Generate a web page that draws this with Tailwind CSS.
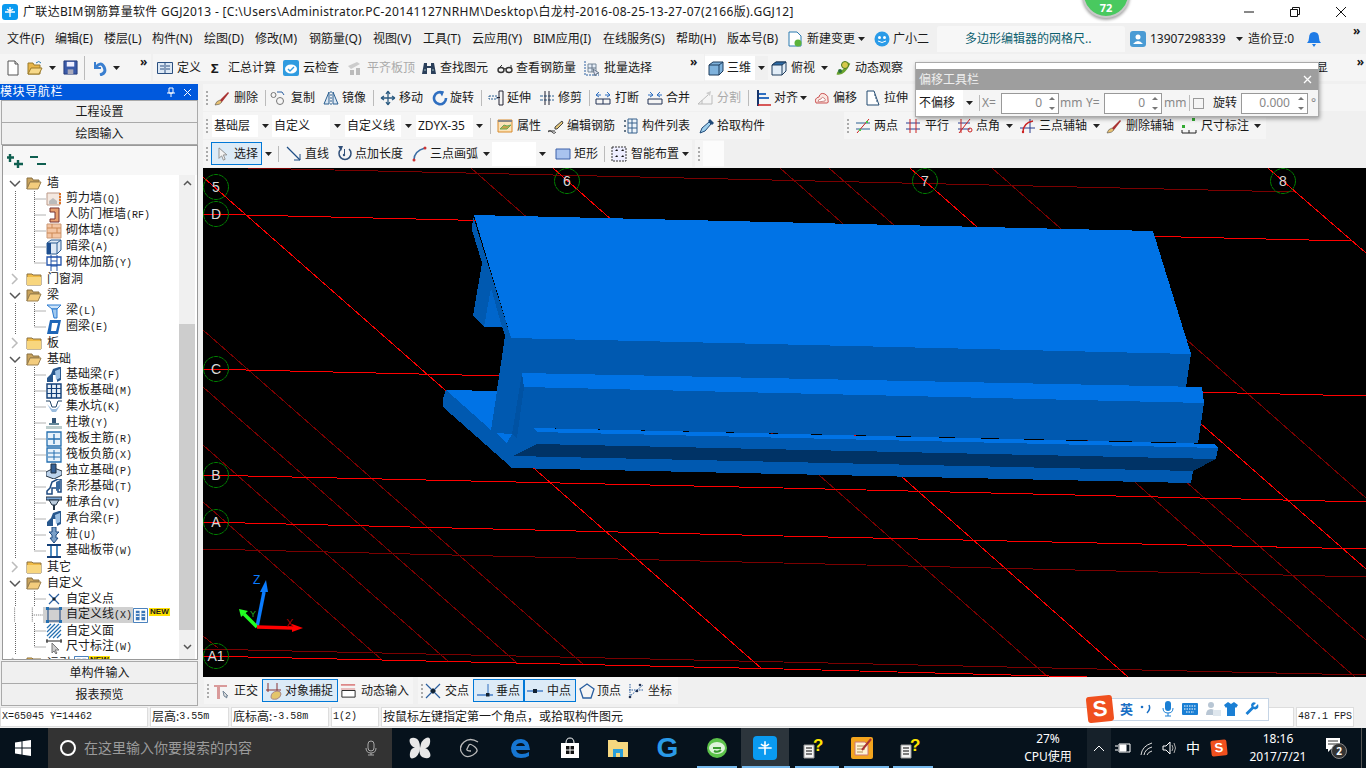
<!DOCTYPE html>
<html lang="zh"><head><meta charset="utf-8"><title>GGJ2013</title>
<script src="https://cdn.jsdelivr.net/npm/@tailwindcss/browser@4"></script></head>
<body class="w-[1366px] h-[768px] overflow-hidden relative bg-[#f0f0f0] text-[12px] leading-4 text-[#1a1a1a] font-['Noto_Sans','Noto_Sans_CJK_SC',sans-serif]">
<svg class="hidden" xmlns="http://www.w3.org/2000/svg">
<symbol id="dd" viewBox="0 0 7 4"><path d="M0 0h7L3.5 4z" fill="#222"/></symbol>
<symbol id="doc" viewBox="0 0 16 16"><path d="M3 1h7l3 3v11H3z" fill="#fff" stroke="#555"/><path d="M10 1v3h3" fill="#ddd" stroke="#555"/></symbol>
<symbol id="open" viewBox="0 0 16 16"><path d="M1 3h5l1 2h6v9H1z" fill="#e8b64a" stroke="#9a7a2a"/><path d="M1 14l3-6h11l-3 6z" fill="#f7d98a" stroke="#9a7a2a"/><path d="M9 3q3-3 5 0" fill="none" stroke="#2a7ab0"/></symbol>
<symbol id="save" viewBox="0 0 16 16"><path d="M1 1h14v14H1z" fill="#3a5aa8" stroke="#223a78"/><path d="M4 2h8v5H4z" fill="#eef"/><path d="M5 10h6v5H5z" fill="#aab"/></symbol>
<symbol id="undo" viewBox="0 0 16 16"><path d="M3 2v6h6" fill="none" stroke="#3a7fd0" stroke-width="2"/><path d="M4 7q5-6 8 0t-4 8" fill="none" stroke="#3a7fd0" stroke-width="3"/></symbol>
<symbol id="def" viewBox="0 0 16 16"><path d="M.5 2.5h15v11H.5z" fill="#dce8f5" stroke="#2a4f80"/><path d="M3 6h4M3 9h4M9 6h4M9 9h4M8 3v10" stroke="#2a4f80"/></symbol>
<symbol id="cloud" viewBox="0 0 16 16"><rect width="16" height="16" rx="2" fill="#2f9be0"/><ellipse cx="8" cy="9" rx="6" ry="4.5" fill="#fff"/><path d="M5 9l2 2 4-4" fill="none" stroke="#2f9be0" stroke-width="1.4"/></symbol>
<symbol id="flush" viewBox="0 0 16 16"><path d="M1 6l9-4 3 2-9 5z" fill="#ccc"/><path d="M3 10h4v5H3zM9 8h4v7H9z" fill="#bbb"/></symbol>
<symbol id="binoc" viewBox="0 0 16 16"><path d="M3 3h3v3h4V3h3l2 11H10V8H6v6H1z" fill="#2a3f5a"/><path d="M3 10h2M11 10h2" stroke="#9bb"/></symbol>
<symbol id="glass" viewBox="0 0 16 16"><ellipse cx="4" cy="10" rx="3" ry="2.5" fill="none" stroke="#333" stroke-width="1.4"/><ellipse cx="12" cy="10" rx="3" ry="2.5" fill="none" stroke="#333" stroke-width="1.4"/><path d="M7 9q1-1 2 0M2 8l3-3M14 8V5" stroke="#333" fill="none"/></symbol>
<symbol id="batch" viewBox="0 0 16 16"><path d="M1 1v14h14" fill="none" stroke="#2a5fa0" stroke-dasharray="2 1"/><path d="M4 4h8v8H4z" fill="#e6eef8" stroke="#789"/><path d="M4 8h8M8 4v8M9 9l6 4-3 1-1 2z" stroke="#678" fill="#dde"/></symbol>
<symbol id="box" viewBox="0 0 16 16"><path d="M1 5l4-3h10v9l-4 4H1z" fill="#7fb2dc" stroke="#1e3c5c"/><path d="M1 5h10v10M11 5l4-3" fill="none" stroke="#1e3c5c"/></symbol>
<symbol id="topv" viewBox="0 0 16 16"><path d="M1 5l4-3h10v9l-4 4H1z" fill="#e2edf7" stroke="#1e3c5c"/><path d="M1 5l4-3h10l-4 3z" fill="#2c6aa5" stroke="#1e3c5c"/><path d="M11 5v10" stroke="#1e3c5c"/></symbol>
<symbol id="orbit" viewBox="0 0 16 16"><path d="M2 13q6 2 12-10" fill="none" stroke="#6aa32e" stroke-width="3"/><circle cx="10" cy="5" r="3.5" fill="#d6c84a" stroke="#4a7a20"/><circle cx="5" cy="11" r="2" fill="#2a6f3a"/></symbol>
<symbol id="brush" viewBox="0 0 16 16"><path d="M1 15q1-4 5-5l2 2q-2 3-7 3z" fill="#e8c070" stroke="#555" stroke-width=".6"/><path d="M6 10l8-8 1 1-7 9z" fill="#a33"/></symbol>
<symbol id="copy" viewBox="0 0 16 16"><circle cx="3.5" cy="5" r="2.5" fill="none" stroke="#777"/><circle cx="10" cy="11" r="3.5" fill="none" stroke="#777"/><path d="M7 2h5M12 2l2 3" stroke="#2a5fa0" fill="none"/></symbol>
<symbol id="mirror" viewBox="0 0 16 16"><path d="M1 14L6 2v12zM15 14L10 2v12z" fill="#dbe7f3" stroke="#2a5f90"/><path d="M8 1v14" stroke="#2a5f90" stroke-dasharray="2 1"/></symbol>
<symbol id="move" viewBox="0 0 16 16"><path d="M8 1v14M1 8h14M8 1L6 4M8 1l2 3M8 15l-2-3M8 15l2-3M1 8l3-2M1 8l3 2M15 8l-3-2M15 8l-3 2" stroke="#2a5a80" stroke-width="1.3" fill="none"/></symbol>
<symbol id="rot" viewBox="0 0 16 16"><path d="M11 3a6 6 0 1 0 3 5" fill="none" stroke="#2f6fc0" stroke-width="2.6"/><path d="M7 1l5 .5-2 5z" fill="#2f6fc0"/></symbol>
<symbol id="ext" viewBox="0 0 16 16"><path d="M1 6h8v3H1z" fill="none" stroke="#2a5f90" stroke-dasharray="2 1"/><path d="M11 1h4v14h-4z" fill="none" stroke="#223"/><path d="M9 7.500h3" stroke="#223"/></symbol>
<symbol id="trim" viewBox="0 0 16 16"><path d="M1 6h14M1 10h14" stroke="#2a5f90" stroke-dasharray="3 1"/><path d="M6 1v14M10 1v14" stroke="#223"/></symbol>
<symbol id="brk" viewBox="0 0 16 16"><path d="M1 5l3-3M1 5l3 2M1 5h5M15 5l-3-3M15 5l-3 2M15 5h-5" stroke="#2f6fc0" fill="none"/><path d="M1 9h14v5H1zM8 9v5" fill="none" stroke="#235"/></symbol>
<symbol id="mrg" viewBox="0 0 16 16"><path d="M6 5L3 2M6 5l-3 2M6 5H1M10 5l3-3M10 5l3 2M10 5h5" stroke="#2f6fc0" fill="none"/><path d="M1 9h14v5H1z" fill="none" stroke="#235"/></symbol>
<symbol id="split" viewBox="0 0 16 16"><path d="M1 14h14M1 14l10-9M5 14V10M15 14V5" stroke="#bbb" fill="none"/><path d="M9 3l5-2-1 5z" fill="#ccc"/></symbol>
<symbol id="align" viewBox="0 0 16 16"><path d="M2 0v16" stroke="#17356b" stroke-width="2"/><path d="M3 4h7M3 8h10" stroke="#2f6fc0" stroke-width="2"/><path d="M2 15h13" stroke="#c22" stroke-width="1.500"/></symbol>
<symbol id="off" viewBox="0 0 16 16"><path d="M2 13q-2-5 3-6 1-5 6-3 4 2 3 6 1 3-1 3z" fill="#fbe6e0" stroke="#c55"/><path d="M4 12q0-3 3-3 1-3 3-1 2 1 1 3z" fill="#fff" stroke="#c88"/></symbol>
<symbol id="strch" viewBox="0 0 16 16"><path d="M2 1h7l5 14H2z" fill="#fff" stroke="#234a70"/><path d="M9 5l2 0M10 8h2M11 11h2" stroke="#234a70" stroke-dasharray="1 1"/></symbol>
<symbol id="prop" viewBox="0 0 16 16"><path d="M1 2h14v12H1z" fill="#fbe3b8" stroke="#d98a2a"/><path d="M1 2h14v2H1z" fill="#888"/><path d="M3 11l4-4 3 1 4-1-4 4z" fill="#c8a14a" stroke="#6a5"/></symbol>
<symbol id="edit" viewBox="0 0 16 16"><path d="M0 13h7" stroke="#333"/><path d="M7 9l7-6 1 2-6 6H7z" fill="#e6c97a" stroke="#444"/><path d="M0 14q2-3 4 0t4 0" fill="none" stroke="#444"/></symbol>
<symbol id="list" viewBox="0 0 16 16"><path d="M1 2h2v2H1zM1 7h2v2H1zM1 12h2v2H1z" fill="#678"/><path d="M5 1h9v14H5zM5 5h9M5 10h9M9 1v14" fill="#eef5fb" stroke="#37618c"/></symbol>
<symbol id="pick" viewBox="0 0 16 16"><path d="M1 15l2-5 7-6 2 2-6 7z" fill="#9fd0ee" stroke="#204a78"/><path d="M9 3l2-2 4 4-2 2z" fill="#204a78"/></symbol>
<symbol id="two" viewBox="0 0 16 16"><path d="M1 5h14M1 11h14" stroke="#2a5f90"/><path d="M2 15L14 1" stroke="#c22"/><path d="M4 11h2v2H4zM11 3h2v2h-2z" fill="#4c4"/></symbol>
<symbol id="par" viewBox="0 0 16 16"><path d="M1 5h14M1 11h14" stroke="#2a3f90"/><path d="M5 1v14M11 1v14" stroke="#c22"/></symbol>
<symbol id="ang" viewBox="0 0 16 16"><path d="M1 5h12M1 11h12" stroke="#2a3f90"/><path d="M2 15L13 1M4 1v14" stroke="#c22"/><circle cx="13" cy="12" r="2" fill="none" stroke="#c22"/></symbol>
<symbol id="arc3" viewBox="0 0 16 16"><path d="M0 10h15M10 1v14" stroke="#2a3f90"/><path d="M3 14q0-9 10-11" fill="none" stroke="#c22" stroke-width="1.300"/><circle cx="3" cy="14" r="1.200" fill="#c22"/></symbol>
<symbol id="dim" viewBox="0 0 16 16"><path d="M1 15h14M1 12v3M8 12v3M15 12v3" stroke="#222"/><path d="M1 7h3v3H1zM11 0h3v3h-3z" fill="#3a3"/></symbol>
<symbol id="curs" viewBox="0 0 12 16"><path d="M2 1v12l3-3 2 5 2-1-2-5h4z" fill="#f4f4f4" stroke="#888"/></symbol>
<symbol id="line" viewBox="0 0 16 16"><path d="M1 1l13 13" stroke="#1f4f86" stroke-width="1.300"/><path d="M14 8v6H8" fill="none" stroke="#1f4f86"/></symbol>
<symbol id="plen" viewBox="0 0 16 16"><path d="M5 3a6 6 0 1 0 8 0" fill="none" stroke="#30507a" stroke-width="1.500"/><path d="M2 0h5l-2 5zM8 8h1V3H8z" fill="#30507a"/><circle cx="8" cy="9" r="1.200" fill="#30507a"/></symbol>
<symbol id="arcd" viewBox="0 0 16 16"><path d="M2 14q0-9 11-12" fill="none" stroke="#3a6ea5" stroke-width="1.500"/><circle cx="2" cy="14" r="1.500" fill="#c33"/><circle cx="13" cy="2" r="1.500" fill="#c33"/></symbol>
<symbol id="rect" viewBox="0 0 16 16"><path d="M1 3h14v10H1z" fill="#a9c3ee" stroke="#3c60a8"/></symbol>
<symbol id="smart" viewBox="0 0 16 16"><path d="M1 1h14v14H1z" fill="#eef" stroke="#333" stroke-dasharray="2 1"/><path d="M4 5l2-2 1 2zM10 5l2-2 1 2zM4 11l2-2 1 2zM10 11l2-2 1 2z" fill="#111"/></symbol>
<symbol id="orth" viewBox="0 0 16 16"><path d="M0 2h13v2H0zM3 2h3v14H3z" fill="#d99a9a"/><path d="M9 8l5 5-2 0 1 2-3-2z" fill="#ddd" stroke="#789"/></symbol>
<symbol id="snap" viewBox="0 0 18 18"><path d="M3 1v9M12 1v9M1 8h15" stroke="#833" fill="none"/><path d="M6 15q0-5 6-6 4 0 4 3t-4 5q-6 1-6-2z" fill="#e3c56b" stroke="#a88"/></symbol>
<symbol id="dyn" viewBox="0 0 18 18"><path d="M1 2h15v2H1zM1 7h15v1H1z" fill="#d88"/><path d="M2 9h14v7H2z" fill="#fff" stroke="#222"/></symbol>
<symbol id="cross" viewBox="0 0 16 16"><path d="M1 1l14 14M15 1L1 15" stroke="#2a5fa0" stroke-width="1.200"/><path d="M5 8l3-3 3 3-3 3z" fill="#123"/></symbol>
<symbol id="perp" viewBox="0 0 16 16"><path d="M0 12h16" stroke="#2f6fc0" stroke-width="1.300"/><path d="M11 1v11" stroke="#2f6fc0"/><rect x="9" y="10" width="3.500" height="3.500" fill="#123"/></symbol>
<symbol id="midp" viewBox="0 0 16 16"><path d="M0 8h16" stroke="#2f6fc0" stroke-width="1.300"/><rect x="6" y="6" width="4" height="4" fill="#123"/></symbol>
<symbol id="vert" viewBox="0 0 16 16"><path d="M8 1l7 5-3 9H4L1 6z" fill="none" stroke="#2a5fa0" stroke-width="1.300"/></symbol>
<symbol id="coord" viewBox="0 0 16 16"><path d="M1 14L15 2M2 1v14M1 7h14" stroke="#2a5fa0" stroke-dasharray="1.500 1" fill="none"/><circle cx="12" cy="2" r="1.300" fill="#235"/><circle cx="2" cy="14" r="1.300" fill="#235"/><circle cx="9" cy="8" r="1.300" fill="#235"/></symbol>
<symbol id="fo" viewBox="0 0 16 16"><path d="M1 3h5l1 2h6v2H4l-3 7z" fill="#c9a35c" stroke="#8a7040"/><path d="M1 14l3-7h11l-3 7z" fill="#f3cc7d" stroke="#9a8050"/></symbol>
<symbol id="fc" viewBox="0 0 16 16"><path d="M1 3h5l1 1h8v10H1z" fill="#f0bb46" stroke="#8a7040"/><path d="M1 6h14v8H1z" fill="#f8d67e"/></symbol>
<symbol id="copen" viewBox="0 0 16 16"><path d="M3 6l5 5 5-5" fill="none" stroke="#555" stroke-width="1.500"/></symbol>
<symbol id="cshut" viewBox="0 0 16 16"><path d="M5 3l5 5-5 5" fill="none" stroke="#bbb" stroke-width="1.500"/></symbol>
<symbol id="tm" viewBox="0 0 43 16"><path d="M12.500 0v16M31.500 0v16M31.500 8H43" stroke="#666" stroke-dasharray="1 1"/></symbol>
<symbol id="tl" viewBox="0 0 43 16"><path d="M12.500 0v16M31.500 0v8M31.500 8H43" stroke="#666" stroke-dasharray="1 1"/></symbol>
<symbol id="shear" viewBox="0 0 16 16"><path d="M1 2h13v12H1z" fill="#f4e8e0" stroke="#b98"/><path d="M3 10l4-3 4 3v3H3z" fill="#bbb"/><path d="M14 2v12" stroke="#e07020" stroke-dasharray="2 1" stroke-width="2"/></symbol>
<symbol id="door" viewBox="0 0 16 16"><path d="M4 1h9v14H4v-3h5V5H4z" fill="#e8a070" stroke="#733"/></symbol>
<symbol id="brick" viewBox="0 0 16 16"><path d="M1 1h14v14H1z" fill="#f4c6a4" stroke="#c97"/><path d="M1 5h14M1 10h14M6 1v4M11 5v5M6 10v5" stroke="#c85"/></symbol>
<symbol id="dbeam" viewBox="0 0 16 16"><path d="M1 4l4-3h10v10l-4 4H1z" fill="#dfe9f5" stroke="#2a5a90"/><path d="M1 4h10v11M11 4l4-3" fill="none" stroke="#2a5a90"/><path d="M1 4h4v11H1z" fill="#1e4f90"/></symbol>
<symbol id="mason" viewBox="0 0 16 16"><path d="M1 2h14v8H1z" fill="none" stroke="#1f50a8" stroke-width="1.300"/><path d="M5 0v16M11 0v16M5 6h6M5 11h6" stroke="#1f50a8"/></symbol>
<symbol id="beam" viewBox="0 0 16 16"><path d="M1 2h14l-4 4H6z" fill="#cfe4f8" stroke="#2a7ad0"/><path d="M6 6h5v9H8z" fill="#9fc8ef" stroke="#2a7ad0"/></symbol>
<symbol id="ring" viewBox="0 0 16 16"><path d="M4 1h11l-3 14H1z" fill="#1e66b8"/><path d="M6 4h6l-2 8H5z" fill="#fff"/></symbol>
<symbol id="fbeam" viewBox="0 0 16 16"><path d="M1 15v-4l4-4 2-5 6-2h2v13l-4 2V8H7v7z" fill="#28588e"/><path d="M9 4l5-2v9l-4 2z" fill="#9cc0e4"/></symbol>
<symbol id="raft" viewBox="0 0 16 16"><path d="M1 1h14v14H1z" fill="#e8f0f8" stroke="#123f78" stroke-width="1.400"/><path d="M1 5.500h14M1 10.500h14M5.500 1v14M10.500 1v14" stroke="#123f78" stroke-width="1.200"/></symbol>
<symbol id="pit" viewBox="0 0 16 16"><path d="M0 2h4l2 6h4l2-6h4" fill="none" stroke="#246"/><path d="M1 5l5 8h4l5-8-5 5H6z" fill="#9bd"/></symbol>
<symbol id="pier" viewBox="0 0 16 16"><path d="M6 3h4v5H6z" fill="#357"/><path d="M3 8h10v2H3z" fill="#689"/><path d="M0 11h16v3H0z" fill="#bcc"/></symbol>
<symbol id="rmain" viewBox="0 0 16 16"><path d="M1 1h14v14H1z" fill="#e8f2fb" stroke="#246fb0" stroke-width="1.300"/><path d="M2 8h12M8 3v10" stroke="#246fb0" stroke-width="1.300"/></symbol>
<symbol id="rneg" viewBox="0 0 16 16"><path d="M1 1h14v14H1z" fill="#e8f2fb" stroke="#246fb0" stroke-width="1.300"/><path d="M2 6h12M2 10h12M8 3v10" stroke="#246fb0"/></symbol>
<symbol id="iso" viewBox="0 0 16 16"><path d="M0 9l8-4 8 3v4l-8 4-8-3z" fill="#bcd3ec" stroke="#234"/><path d="M5 1h5v9H5z" fill="#345f94" stroke="#234"/></symbol>
<symbol id="strip" viewBox="0 0 16 16"><path d="M1 15v-3l3-3 2-6 6-3h3v13h-3V9H6v6z" fill="#fff" stroke="#1e4a80" stroke-width="1.500"/><path d="M10 3l4-2v9l-4 2z" fill="#38699e"/></symbol>
<symbol id="cap" viewBox="0 0 16 16"><path d="M0 2h16v3H0z" fill="#7aa6d6" stroke="#234"/><path d="M3 5h10l-3 5H6z" fill="#bcd" stroke="#234"/><path d="M7 10h2v5H7z" fill="#234"/></symbol>
<symbol id="pile" viewBox="0 0 16 16"><path d="M6 0h4v5h3l-3 3v3h2l-4 5-4-5h2V8L3 5h3z" fill="#7aa0c8" stroke="#1e4a80"/></symbol>
<symbol id="bnd" viewBox="0 0 16 16"><path d="M1 2h14M1 14h14" stroke="#123f78" stroke-width="2"/><path d="M5 3v10M11 3v10" stroke="#246fb0" stroke-width="1.600"/></symbol>
<symbol id="cpt" viewBox="0 0 16 16"><path d="M3 3l10 10M13 3L3 13" stroke="#2a5fa0" stroke-width="1.200"/><path d="M6 8l2-2 2 2-2 2z" fill="#123"/></symbol>
<symbol id="cln" viewBox="0 0 16 16"><path d="M2 2h12v12H2z" fill="none" stroke="#123f78"/><path d="M0 0h3v3H0zM13 0h3v3h-3zM0 13h3v3H0zM13 13h3v3h-3z" fill="#246fb0"/></symbol>
<symbol id="cfc" viewBox="0 0 16 16"><path d="M1 1h14v14H1z" fill="#fff"/><path d="M1 5l4-4M1 9l8-8M1 13L13 1M3 15L15 3M7 15l8-8M11 15l4-4" stroke="#246fb0" stroke-width="1.200"/></symbol>
<symbol id="cdim" viewBox="0 0 16 16"><path d="M0 2h16M1 0v4M15 0v4" stroke="#222"/><path d="M6 4v10l2-2 2 3 1-1-2-3h4z" fill="#ccc" stroke="#777"/></symbol>
<symbol id="cgrid" viewBox="0 0 16 16"><path d="M.5.5h15v15H.5z" fill="#fff" stroke="#3a76b8"/><path d="M3 3h4v10H3zM9 3h4v10H9z" fill="#3a76b8"/><path d="M3 6h4M3 9h4M9 6h4M9 9h4" stroke="#fff"/></symbol>
<symbol id="ques" viewBox="0 0 24 24"><path d="M3 9h10v13H3z" fill="#f3f3f3" stroke="#999"/><path d="M5 12h6M5 15h6M5 18h6" stroke="#555" stroke-width="1.500"/><text x="12" y="15" font-family="Liberation Sans" font-size="17" font-weight="700" fill="#ffe500">?</text></symbol>
</svg>

<!-- title -->
<div class="h-[23px] bg-white flex items-center relative">
  <span class="ml-[2px] size-[16px] rounded-[3px] bg-[#0a9af0] flex items-center justify-center"><svg class="size-[12px]" viewBox="0 0 12 12"><path d="M6 1v10M1 6h10M3 3q3 3 6 0" stroke="#fff" stroke-width="1.300" fill="none"/></svg></span>
  <span class="ml-[5px] whitespace-nowrap tracking-[0.32px]">广联达BIM钢筋算量软件 GGJ2013 - [C:\Users\Administrator.PC-20141127NRHM\Desktop\白龙村-2016-08-25-13-27-07(2166版).GGJ12]</span>
  <div class="ml-auto flex items-center">
    <svg class="size-[12px] mr-[34px]" viewBox="0 0 12 12"><path d="M1 6h10" stroke="#111"/></svg>
    <svg class="size-[12px] mr-[34px]" viewBox="0 0 12 12"><path d="M1.500 3.500h7v7h-7zM3.500 3.500v-2h7v7h-2" fill="none" stroke="#111"/></svg>
    <svg class="size-[12px] mr-[19px]" viewBox="0 0 12 12"><path d="M1 1l10 10M11 1L1 11" stroke="#111"/></svg>
  </div>
</div>
<!-- green badge -->
<div class="absolute left-[1082px] top-[-30px] size-[48px] rounded-full bg-[#49c95f] border-2 border-[#c8c8c8] shadow-[0_2px_3px_rgba(0,0,0,.35)] flex items-end justify-center text-white font-bold text-[11px] leading-[16px] z-20">72</div>

<!-- menu -->
<div class="h-[31px] flex items-center pl-[7px] whitespace-nowrap">
  <span class="w-[48px]">文件(F)</span><span class="w-[49px]">编辑(E)</span><span class="w-[48px]">楼层(L)</span><span class="w-[52px]">构件(N)</span><span class="w-[51px]">绘图(D)</span><span class="w-[54px]">修改(M)</span><span class="w-[64px]">钢筋量(Q)</span><span class="w-[50px]">视图(V)</span><span class="w-[49px]">工具(T)</span><span class="w-[61px]">云应用(Y)</span><span class="w-[70px]">BIM应用(I)</span><span class="w-[73px]">在线服务(S)</span><span class="w-[51px]">帮助(H)</span><span class="w-[60px]">版本号(B)</span>
  <svg class="size-4 shrink-0" viewBox="0 0 16 16"><path d="M2 1h8l4 4v10H2z" fill="#fff" stroke="#2a7ab0"/><circle cx="11" cy="12" r="3.500" fill="#5cb33a"/></svg>
  <span class="ml-[4px] w-[51px]">新建变更</span><svg class="w-[7px] h-[4px] shrink-0"><use href="#dd"/></svg>
  <svg class="ml-[9px] size-4 shrink-0" viewBox="0 0 16 16"><circle cx="8" cy="8" r="7.500" fill="#2a9be8"/><circle cx="5.500" cy="6.500" r="1.500" fill="#fff"/><circle cx="10.500" cy="6.500" r="1.500" fill="#fff"/><path d="M4 10q4 3 8 0" stroke="#fff" fill="none"/></svg>
  <span class="ml-[3px] w-[44px]">广小二</span>
  <span class="h-[26px] w-[188px] bg-[#f7f7f7] rounded-t-[3px] flex items-center pl-[28px] text-[#0d5f6f]">多边形编辑器的网格尺..</span>
  <span class="ml-[5px] size-4 rounded-[3px] bg-[#4a9bd4] flex items-center justify-center"><svg class="size-3" viewBox="0 0 12 12"><circle cx="6" cy="4" r="2.500" fill="#fff"/><path d="M1 11q5-6 10 0z" fill="#fff"/></svg></span>
  <span class="ml-[4px] w-[86px]">13907298339</span><svg class="w-[7px] h-[4px] shrink-0"><use href="#dd"/></svg>
  <span class="ml-[5px] w-[58px]">造价豆:0</span>
  <svg class="size-4 shrink-0" viewBox="0 0 16 16"><path d="M8 1q5 0 5 6 0 3 2 5H1q2-2 2-5 0-6 5-6z" fill="#1e7be6"/><path d="M6 13h4l-2 3z" fill="#1e7be6"/></svg>
  <span class="ml-[31px] font-bold leading-3 self-start mt-[2px]">»</span>
</div>

<!-- toolbar 1 -->
<div class="h-[27px] flex items-center whitespace-nowrap">
  <div class="h-[27px] w-[151px] bg-[#f5f5f5] flex items-center pl-[5px] shrink-0">
    <svg class="size-4 shrink-0"><use href="#doc"/></svg>
    <svg class="ml-[6px] size-4 shrink-0"><use href="#open"/></svg>
    <svg class="ml-[6px] w-[7px] h-[4px] shrink-0"><use href="#dd"/></svg>
    <svg class="ml-[7px] size-[15px] shrink-0"><use href="#save"/></svg>
    <span class="ml-[6px] w-px h-[24px] bg-[#bbb]"></span>
    <svg class="ml-[7px] size-4 shrink-0"><use href="#undo"/></svg>
    <svg class="ml-[5px] w-[7px] h-[4px] shrink-0"><use href="#dd"/></svg>
    <span class="ml-[20px] font-bold leading-3 self-start mt-[2px]">»</span>
  </div>
  <div class="ml-[2px] h-[27px] w-[551px] bg-[#f5f5f5] flex items-center pl-[4px] shrink-0">
    <span class="flex w-[54px] items-center gap-[4px]"><svg class="size-4 shrink-0"><use href="#def"/></svg>定义</span>
    <span class="flex w-[72px] items-center gap-[9px]"><span class="w-2 font-bold text-[13px]">Σ</span>汇总计算</span>
    <span class="flex w-[64px] items-center gap-[4px]"><svg class="size-4 shrink-0"><use href="#cloud"/></svg>云检查</span>
    <span class="flex w-[74px] items-center gap-[4px] text-[#aaa]"><svg class="size-4 shrink-0"><use href="#flush"/></svg>平齐板顶</span>
    <span class="flex w-[76px] items-center gap-[3px]"><svg class="size-4 shrink-0"><use href="#binoc"/></svg>查找图元</span>
    <span class="flex w-[87px] items-center gap-[3px]"><svg class="size-4 shrink-0"><use href="#glass"/></svg>查看钢筋量</span>
    <span class="flex w-[90px] items-center gap-[4px]"><svg class="size-4 shrink-0"><use href="#batch"/></svg>批量选择</span>
    <span class="ml-[16px] font-bold leading-3 self-start mt-[2px]">»</span>
  </div>
  <div class="ml-[1px] h-[27px] flex-1 bg-[#f5f5f5] flex items-center relative">
    <span class="h-[24px] w-[50px] bg-white flex items-center gap-[3px] pl-[3px]"><svg class="size-4 shrink-0"><use href="#box"/></svg>三维</span>
    <span class="h-[24px] w-[13px] bg-[#f0f0f0] flex items-center justify-center"><svg class="w-[7px] h-[4px]"><use href="#dd"/></svg></span>
    <span class="ml-[3px] flex items-center gap-[4px]"><svg class="size-4 shrink-0"><use href="#topv"/></svg>俯视</span><svg class="ml-[6px] w-[7px] h-[4px] shrink-0"><use href="#dd"/></svg>
    <span class="ml-[7px] flex items-center gap-[4px]"><svg class="size-4 shrink-0"><use href="#orbit"/></svg>动态观察</span>
    <span class="ml-[413px]">显</span>
    <span class="ml-auto mr-[2px] font-bold leading-3 self-start mt-[2px]">»</span>
  </div>
</div>

<!-- main -->
<div class="mt-[3px] h-[622px] flex">
  <!-- left panel -->
  <div class="w-[203px] shrink-0 flex flex-col pr-[5px]">
    <div class="h-[16px] bg-[#0059dd] text-white flex items-center tracking-[0.6px] pr-[6px]"><span>模块导航栏</span>
      <svg class="ml-auto size-[10px]" viewBox="0 0 10 10"><path d="M3 1h4v5H3zM1 6h8M5 6v4" stroke="#fff" fill="none"/></svg>
      <svg class="ml-[7px] size-[9px]" viewBox="0 0 9 9"><path d="M1 1l7 7M8 1L1 8" stroke="#fff"/></svg></div>
    <div class="ml-[1px] h-[23px] border border-[#aaa] flex items-center justify-center pt-px">工程设置</div>
    <div class="ml-[1px] h-[22px] border border-t-0 border-[#aaa] flex items-center justify-center">绘图输入</div>
    <div class="ml-[2px] h-[515px] border border-[#999] bg-white flex flex-col overflow-hidden">
      <div class="h-[29px] shrink-0 bg-[#f7f7f7] flex items-center pl-[4px] gap-[7px]">
        <svg class="size-4" viewBox="0 0 16 16"><path d="M3 1v8M0 4.500h7M11 7v8M7 11h9" stroke="#0f5f50" stroke-width="2.400"/></svg>
        <svg class="size-4" viewBox="0 0 16 16"><path d="M0 4h8M7 11h9" stroke="#0f5f50" stroke-width="2.200"/></svg>
      </div>
      <div class="flex-1 flex min-h-0">
        <div class="w-[176px] h-full overflow-hidden whitespace-nowrap">
          <div class="h-4 flex items-center"><svg class="ml-[4px] size-4 shrink-0"><use href="#copen"/></svg><span class="w-[3px]"></span><svg class="size-4 shrink-0"><use href="#fo"/></svg><span class="ml-[5px]">墙</span></div>
          <div class="h-4 flex items-center"><svg class="w-[43px] h-4 shrink-0"><use href="#tm"/></svg><svg class="size-4 shrink-0"><use href="#shear"/></svg><span class="ml-[4px]">剪力墙<span class="font-['Liberation_Mono'] text-[10px]">(Q)</span></span></div>
          <div class="h-4 flex items-center"><svg class="w-[43px] h-4 shrink-0"><use href="#tm"/></svg><svg class="size-4 shrink-0"><use href="#door"/></svg><span class="ml-[4px]">人防门框墙<span class="font-['Liberation_Mono'] text-[10px]">(RF)</span></span></div>
          <div class="h-4 flex items-center"><svg class="w-[43px] h-4 shrink-0"><use href="#tm"/></svg><svg class="size-4 shrink-0"><use href="#brick"/></svg><span class="ml-[4px]">砌体墙<span class="font-['Liberation_Mono'] text-[10px]">(Q)</span></span></div>
          <div class="h-4 flex items-center"><svg class="w-[43px] h-4 shrink-0"><use href="#tm"/></svg><svg class="size-4 shrink-0"><use href="#dbeam"/></svg><span class="ml-[4px]">暗梁<span class="font-['Liberation_Mono'] text-[10px]">(A)</span></span></div>
          <div class="h-4 flex items-center"><svg class="w-[43px] h-4 shrink-0"><use href="#tl"/></svg><svg class="size-4 shrink-0"><use href="#mason"/></svg><span class="ml-[4px]">砌体加筋<span class="font-['Liberation_Mono'] text-[10px]">(Y)</span></span></div>
          <div class="h-4 flex items-center"><svg class="ml-[4px] size-4 shrink-0"><use href="#cshut"/></svg><span class="w-[3px]"></span><svg class="size-4 shrink-0"><use href="#fc"/></svg><span class="ml-[5px]">门窗洞</span></div>
          <div class="h-4 flex items-center"><svg class="ml-[4px] size-4 shrink-0"><use href="#copen"/></svg><span class="w-[3px]"></span><svg class="size-4 shrink-0"><use href="#fo"/></svg><span class="ml-[5px]">梁</span></div>
          <div class="h-4 flex items-center"><svg class="w-[43px] h-4 shrink-0"><use href="#tm"/></svg><svg class="size-4 shrink-0"><use href="#beam"/></svg><span class="ml-[4px]">梁<span class="font-['Liberation_Mono'] text-[10px]">(L)</span></span></div>
          <div class="h-4 flex items-center"><svg class="w-[43px] h-4 shrink-0"><use href="#tl"/></svg><svg class="size-4 shrink-0"><use href="#ring"/></svg><span class="ml-[4px]">圈梁<span class="font-['Liberation_Mono'] text-[10px]">(E)</span></span></div>
          <div class="h-4 flex items-center"><svg class="ml-[4px] size-4 shrink-0"><use href="#cshut"/></svg><span class="w-[3px]"></span><svg class="size-4 shrink-0"><use href="#fc"/></svg><span class="ml-[5px]">板</span></div>
          <div class="h-4 flex items-center"><svg class="ml-[4px] size-4 shrink-0"><use href="#copen"/></svg><span class="w-[3px]"></span><svg class="size-4 shrink-0"><use href="#fo"/></svg><span class="ml-[5px]">基础</span></div>
          <div class="h-4 flex items-center"><svg class="w-[43px] h-4 shrink-0"><use href="#tm"/></svg><svg class="size-4 shrink-0"><use href="#fbeam"/></svg><span class="ml-[4px]">基础梁<span class="font-['Liberation_Mono'] text-[10px]">(F)</span></span></div>
          <div class="h-4 flex items-center"><svg class="w-[43px] h-4 shrink-0"><use href="#tm"/></svg><svg class="size-4 shrink-0"><use href="#raft"/></svg><span class="ml-[4px]">筏板基础<span class="font-['Liberation_Mono'] text-[10px]">(M)</span></span></div>
          <div class="h-4 flex items-center"><svg class="w-[43px] h-4 shrink-0"><use href="#tm"/></svg><svg class="size-4 shrink-0"><use href="#pit"/></svg><span class="ml-[4px]">集水坑<span class="font-['Liberation_Mono'] text-[10px]">(K)</span></span></div>
          <div class="h-4 flex items-center"><svg class="w-[43px] h-4 shrink-0"><use href="#tm"/></svg><svg class="size-4 shrink-0"><use href="#pier"/></svg><span class="ml-[4px]">柱墩<span class="font-['Liberation_Mono'] text-[10px]">(Y)</span></span></div>
          <div class="h-4 flex items-center"><svg class="w-[43px] h-4 shrink-0"><use href="#tm"/></svg><svg class="size-4 shrink-0"><use href="#rmain"/></svg><span class="ml-[4px]">筏板主筋<span class="font-['Liberation_Mono'] text-[10px]">(R)</span></span></div>
          <div class="h-4 flex items-center"><svg class="w-[43px] h-4 shrink-0"><use href="#tm"/></svg><svg class="size-4 shrink-0"><use href="#rneg"/></svg><span class="ml-[4px]">筏板负筋<span class="font-['Liberation_Mono'] text-[10px]">(X)</span></span></div>
          <div class="h-4 flex items-center"><svg class="w-[43px] h-4 shrink-0"><use href="#tm"/></svg><svg class="size-4 shrink-0"><use href="#iso"/></svg><span class="ml-[4px]">独立基础<span class="font-['Liberation_Mono'] text-[10px]">(P)</span></span></div>
          <div class="h-4 flex items-center"><svg class="w-[43px] h-4 shrink-0"><use href="#tm"/></svg><svg class="size-4 shrink-0"><use href="#strip"/></svg><span class="ml-[4px]">条形基础<span class="font-['Liberation_Mono'] text-[10px]">(T)</span></span></div>
          <div class="h-4 flex items-center"><svg class="w-[43px] h-4 shrink-0"><use href="#tm"/></svg><svg class="size-4 shrink-0"><use href="#cap"/></svg><span class="ml-[4px]">桩承台<span class="font-['Liberation_Mono'] text-[10px]">(V)</span></span></div>
          <div class="h-4 flex items-center"><svg class="w-[43px] h-4 shrink-0"><use href="#tm"/></svg><svg class="size-4 shrink-0"><use href="#fbeam"/></svg><span class="ml-[4px]">承台梁<span class="font-['Liberation_Mono'] text-[10px]">(F)</span></span></div>
          <div class="h-4 flex items-center"><svg class="w-[43px] h-4 shrink-0"><use href="#tm"/></svg><svg class="size-4 shrink-0"><use href="#pile"/></svg><span class="ml-[4px]">桩<span class="font-['Liberation_Mono'] text-[10px]">(U)</span></span></div>
          <div class="h-4 flex items-center"><svg class="w-[43px] h-4 shrink-0"><use href="#tl"/></svg><svg class="size-4 shrink-0"><use href="#bnd"/></svg><span class="ml-[4px]">基础板带<span class="font-['Liberation_Mono'] text-[10px]">(W)</span></span></div>
          <div class="h-4 flex items-center"><svg class="ml-[4px] size-4 shrink-0"><use href="#cshut"/></svg><span class="w-[3px]"></span><svg class="size-4 shrink-0"><use href="#fc"/></svg><span class="ml-[5px]">其它</span></div>
          <div class="h-4 flex items-center"><svg class="ml-[4px] size-4 shrink-0"><use href="#copen"/></svg><span class="w-[3px]"></span><svg class="size-4 shrink-0"><use href="#fo"/></svg><span class="ml-[5px]">自定义</span></div>
          <div class="h-4 flex items-center"><svg class="w-[43px] h-4 shrink-0"><use href="#tm"/></svg><svg class="size-4 shrink-0"><use href="#cpt"/></svg><span class="ml-[4px]">自定义点</span></div>
          <div class="h-4 flex items-center"><svg class="w-[40px] h-4 shrink-0" viewBox="0 0 40 16"><use href="#tm"/></svg><span class="flex items-center h-4 bg-[#d0d0d0] pl-[3px] pr-[1px]"><svg class="size-4 shrink-0"><use href="#cln"/></svg><span class="ml-[4px]">自定义线<span class="font-['Liberation_Mono'] text-[10px]">(X)</span></span></span><svg class="size-[15px] shrink-0"><use href="#cgrid"/></svg><span class="font-['Liberation_Sans'] text-[8px] font-bold bg-[#ffe000] leading-[8px] px-[1px] self-start mt-[1px] ml-[1px]">NEW</span></div>
          <div class="h-4 flex items-center"><svg class="w-[43px] h-4 shrink-0"><use href="#tm"/></svg><svg class="size-4 shrink-0"><use href="#cfc"/></svg><span class="ml-[4px]">自定义面</span></div>
          <div class="h-4 flex items-center"><svg class="w-[43px] h-4 shrink-0"><use href="#tl"/></svg><svg class="size-4 shrink-0"><use href="#cdim"/></svg><span class="ml-[4px]">尺寸标注<span class="font-['Liberation_Mono'] text-[10px]">(W)</span></span></div>
          <div class="h-4 flex items-center"><svg class="ml-[4px] size-4 shrink-0"><use href="#cshut"/></svg><span class="w-[3px]"></span><svg class="size-4 shrink-0"><use href="#fc"/></svg><span class="ml-[5px]">运引</span><svg class="ml-[3px] size-[15px] shrink-0"><use href="#cgrid"/></svg><span class="font-['Liberation_Sans'] text-[8px] font-bold bg-[#ffe000] leading-[8px] px-[1px] self-start mt-[1px]">NEW</span></div>
        </div>
        <div class="w-[16px] h-[484px] bg-[#f0f0f0] flex flex-col items-center shrink-0">
          <svg class="mt-[5px] w-[9px] h-[6px] shrink-0" viewBox="0 0 9 6"><path d="M1 5l3.500-3.500L8 5" fill="none" stroke="#555" stroke-width="1.500"/></svg>
          <div class="mt-[138px] w-full h-[306px] bg-[#cdcdcd] shrink-0"></div>
          <svg class="mt-[14px] w-[9px] h-[6px] shrink-0" viewBox="0 0 9 6"><path d="M1 1l3.500 3.500L8 1" fill="none" stroke="#555" stroke-width="1.500"/></svg>
        </div>
      </div>
    </div>
    <div class="ml-[1px] mt-[1px] h-[23px] border border-[#aaa] flex items-center justify-center">单构件输入</div>
    <div class="ml-[1px] h-[22px] border border-t-0 border-[#aaa] flex items-center justify-center">报表预览</div>
  </div>

  <!-- right -->
  <div class="flex-1 min-w-0 flex flex-col whitespace-nowrap">
    <!-- row 2 -->
    <div class="h-[27px] flex items-center bg-[#f5f5f5] shrink-0">
      <span class="w-[11px] pl-[3px]"><span class="block w-[2px] h-[14px] border-l-2 border-dotted border-[#aaa]"></span></span>
      <span class="flex w-[51px] items-center gap-[4px]"><svg class="size-4 shrink-0"><use href="#brush"/></svg>删除</span><span class="w-[5px]"><span class="block w-px h-[16px] bg-[#bbb]"></span></span>
      <span class="flex w-[53px] items-center gap-[5px]"><svg class="size-4 shrink-0"><use href="#copy"/></svg>复制</span>
      <span class="flex w-[50px] items-center gap-[3px]"><svg class="size-4 shrink-0"><use href="#mirror"/></svg>镜像</span><span class="w-[7px]"><span class="block w-px h-[16px] bg-[#bbb]"></span></span>
      <span class="flex w-[52px] items-center gap-[3px]"><svg class="size-4 shrink-0"><use href="#move"/></svg>移动</span>
      <span class="flex w-[49px] items-center gap-[2px]"><svg class="size-4 shrink-0"><use href="#rot"/></svg>旋转</span><span class="w-[7px]"><span class="block w-px h-[16px] bg-[#bbb]"></span></span>
      <span class="flex w-[51px] items-center gap-[3px]"><svg class="size-4 shrink-0"><use href="#ext"/></svg>延伸</span>
      <span class="flex w-[50px] items-center gap-[3px]"><svg class="size-4 shrink-0"><use href="#trim"/></svg>修剪</span><span class="w-[6px]"><span class="block w-px h-[16px] bg-[#bbb]"></span></span>
      <span class="flex w-[52px] items-center gap-[4px]"><svg class="size-4 shrink-0"><use href="#brk"/></svg>打断</span>
      <span class="flex w-[50px] items-center gap-[3px]"><svg class="size-4 shrink-0"><use href="#mrg"/></svg>合并</span>
      <span class="flex w-[51px] items-center gap-[4px] text-[#aaa]"><svg class="size-4 shrink-0"><use href="#split"/></svg>分割</span><span class="w-[8px]"><span class="block w-px h-[16px] bg-[#bbb]"></span></span>
      <span class="flex w-[58px] items-center gap-[2px]"><svg class="size-4 shrink-0"><use href="#align"/></svg>对齐<svg class="w-[7px] h-[4px] shrink-0"><use href="#dd"/></svg></span>
      <span class="flex w-[51px] items-center gap-[3px]"><svg class="size-4 shrink-0"><use href="#off"/></svg>偏移</span>
      <span class="flex w-[50px] items-center gap-[3px]"><svg class="size-4 shrink-0"><use href="#strch"/></svg>拉伸</span>
    </div>
    <!-- row 3 -->
    <div class="mt-[1px] h-[27px] flex items-center shrink-0">
      <div class="h-[27px] w-[567px] bg-[#f5f5f5] flex items-center shrink-0">
        <span class="w-[9px] pl-[3px]"><span class="block w-[2px] h-[14px] border-l-2 border-dotted border-[#aaa]"></span></span>
        <span class="h-[22px] w-[46px] bg-white flex items-center pl-[2px]">基础层</span><span class="h-[22px] w-[14px] flex items-center justify-center"><svg class="w-[7px] h-[4px]"><use href="#dd"/></svg></span>
        <span class="h-[22px] w-[58px] bg-white flex items-center pl-[2px]">自定义</span><span class="h-[22px] w-[15px] flex items-center justify-center"><svg class="w-[7px] h-[4px]"><use href="#dd"/></svg></span>
        <span class="h-[22px] w-[56px] bg-white flex items-center pl-[2px]">自定义线</span><span class="h-[22px] w-[15px] flex items-center justify-center"><svg class="w-[7px] h-[4px]"><use href="#dd"/></svg></span>
        <span class="h-[22px] w-[57px] bg-white flex items-center pl-[2px]">ZDYX-35</span><span class="h-[22px] w-[12px] flex items-center justify-center"><svg class="w-[7px] h-[4px]"><use href="#dd"/></svg></span>
        <span class="ml-[5px] w-px h-[16px] bg-[#bbb]"></span>
        <span class="ml-[6px] flex w-[51px] items-center gap-[4px]"><svg class="size-4 shrink-0"><use href="#prop"/></svg>属性</span>
        <span class="flex w-[75px] items-center gap-[3px]"><svg class="size-4 shrink-0"><use href="#edit"/></svg>编辑钢筋</span>
        <span class="flex w-[76px] items-center gap-[3px]"><svg class="size-4 shrink-0"><use href="#list"/></svg>构件列表</span>
        <span class="flex w-[70px] items-center gap-[2px]"><svg class="size-4 shrink-0"><use href="#pick"/></svg>拾取构件</span>
      </div>
      <div class="ml-[74px] h-[27px] w-[422px] bg-[#f5f5f5] flex items-center shrink-0">
        <span class="w-[11px] pl-[3px]"><span class="block w-[2px] h-[14px] border-l-2 border-dotted border-[#aaa]"></span></span>
        <span class="flex w-[50px] items-center gap-[3px]"><svg class="size-4 shrink-0"><use href="#two"/></svg>两点</span>
        <span class="flex w-[52px] items-center gap-[4px]"><svg class="size-4 shrink-0"><use href="#par"/></svg>平行</span>
        <span class="flex w-[63px] items-center gap-[3px]"><svg class="size-4 shrink-0"><use href="#ang"/></svg>点角<svg class="ml-[3px] w-[7px] h-[4px] shrink-0"><use href="#dd"/></svg></span>
        <span class="flex w-[86px] items-center gap-[3px]"><svg class="size-4 shrink-0"><use href="#arc3"/></svg>三点辅轴<svg class="ml-[3px] w-[7px] h-[4px] shrink-0"><use href="#dd"/></svg></span>
        <span class="flex w-[75px] items-center gap-[4px]"><svg class="size-4 shrink-0"><use href="#brush"/></svg>删除辅轴</span>
        <span class="flex items-center gap-[4px]"><svg class="size-4 shrink-0"><use href="#dim"/></svg>尺寸标注<svg class="ml-[1px] w-[7px] h-[4px] shrink-0"><use href="#dd"/></svg></span>
      </div>
    </div>
    <!-- row 4 -->
    <div class="mt-[1px] h-[27px] flex items-center shrink-0">
      <div class="h-[27px] w-[489px] bg-[#f5f5f5] flex items-center shrink-0">
        <span class="w-[8px] pl-[3px]"><span class="block w-[2px] h-[14px] border-l-2 border-dotted border-[#aaa]"></span></span>
        <span class="h-[23px] w-[51px] bg-[#dcebf7] border border-[#0078d7] flex items-center pl-[5px] gap-[6px]"><svg class="w-[11px] h-[14px] shrink-0"><use href="#curs"/></svg>选择</span>
        <svg class="ml-[3px] w-[7px] h-[4px] shrink-0"><use href="#dd"/></svg>
        <span class="ml-[6px] w-px h-[16px] bg-[#bbb]"></span>
        <span class="ml-[7px] flex w-[50px] items-center gap-[3px]"><svg class="size-4 shrink-0"><use href="#line"/></svg>直线</span>
        <span class="flex w-[76px] items-center gap-[3px]"><svg class="size-4 shrink-0"><use href="#plen"/></svg>点加长度</span>
        <span class="flex w-[80px] items-center gap-[2px]"><svg class="size-4 shrink-0"><use href="#arcd"/></svg>三点画弧<svg class="ml-[3px] w-[7px] h-[4px] shrink-0"><use href="#dd"/></svg></span>
        <span class="h-[24px] w-[44px] bg-white"></span><span class="h-[24px] w-[12px] flex items-center justify-center"><svg class="w-[7px] h-[4px]"><use href="#dd"/></svg></span>
        <span class="ml-[7px] flex w-[49px] items-center gap-[3px]"><svg class="size-4 shrink-0"><use href="#rect"/></svg>矩形</span>
        <span class="w-px h-[16px] bg-[#bbb]"></span>
        <span class="ml-[6px] flex items-center gap-[4px]"><svg class="size-4 shrink-0"><use href="#smart"/></svg>智能布置<svg class="-ml-[1px] w-[7px] h-[4px] shrink-0"><use href="#dd"/></svg></span>
      </div>
      <div class="ml-[3px] h-[27px] w-[29px] bg-[#f5f5f5] flex items-center pl-[3px]"><span class="block w-[2px] h-[14px] border-l-2 border-dotted border-[#aaa]"></span><span class="ml-[3px] w-[22px] h-[25px] bg-white/70"></span></div>
    </div>
    <!-- canvas -->
    <div class="mt-[1px] h-[509px] bg-black shrink-0 overflow-hidden">
      <svg class="block w-[1163px] h-[509px]" viewBox="203 168 1163 509" shape-rendering="crispEdges">
        <g stroke="#7a0000" fill="none">
          <path d="M247 168L1295 192M203 549L783 563L1366 577M203 649L783 662L1366 675"/>
          <path d="M471 168L1048 677M780 168L1355 677M829 168L1366 640M992 168L1366 498M203 330L584 665M203 387L517 663M203 445L449 662M203 502L382 660M203 636L218 648"/>
        </g>
        <g stroke="#ff0000" fill="none">
          <path d="M203 214L1351 241M203 369L1366 396M203 475L783 488L1366 502M203 522L783 536L1366 549M203 656L783 669L1087 677"/>
          <path d="M203 177L762 669M553 168L1128 677M910 168L1366 569M1268 168L1366 253"/>
        </g>
        <g>
          <path d="M491 430L534 428L537 444L513 456Z" fill="#0059b0"/>
          <path d="M474 215L1153 231L1191 354L511 338Z" fill="#0073e6"/>
          <path d="M473 216L472 230L482 263L473 316L484 327L502 327L505 335L504 343L491 430L496 433L509 344L511 338Z" fill="#0059b0"/>
          <path d="M484 327L491 288L502 327Z" fill="#0066cc"/>
          <path d="M509 342L511 338L1191 354L1186 387L522 373L517 438L496 433Z" fill="#0059b0"/>
          <path d="M522 373L1202 387L1204 403L524 387Z" fill="#0073e6"/>
          <path d="M524 387L1204 403L1198 443L534 428L517 438Z" fill="#0059b0"/>
          <path d="M534 428L1215 444L1218 448L537 432Z" fill="#0073e6"/>
          <path d="M537 432L1218 448L1216 459L537 444Z" fill="#0059b0"/>
          <path d="M537 444L1216 459L1193 471L513 456Z" fill="#003366"/>
          <path d="M513 456L1193 471L1191 483L512 468Z" fill="#0059b0"/>
          <path d="M446 390L497 391L491 430Z" fill="#0073e6"/>
          <path d="M446 390L443 398L443 407L512 468L513 456L537 444L537 432L534 428L507 443L491 430Z" fill="#0059b0"/>
          <path d="M496 433L512 434L507 443Z" fill="#0073e6"/>
          <path d="M522 373L524 387L517 438L512 434Z" fill="#0052a3"/>
        </g>
        <g fill="none" stroke="#008000" stroke-dasharray="5 .6" shape-rendering="auto">
          <circle cx="216" cy="187" r="12.500"/><circle cx="216" cy="214" r="12.500"/><circle cx="216" cy="369" r="12.500"/><circle cx="216" cy="475" r="12.500"/><circle cx="216" cy="522" r="12.500"/><circle cx="216" cy="656" r="12.500"/><circle cx="567" cy="181" r="12.500"/><circle cx="925" cy="181" r="12.500"/><circle cx="1283" cy="181" r="12.500"/>
        </g>
        <g fill="#d8d8d8" font-family="Liberation Sans" font-size="14" text-anchor="middle" shape-rendering="auto">
          <text x="216" y="192">5</text><text x="216" y="219">D</text><text x="216" y="374">C</text><text x="216" y="480">B</text><text x="216" y="527">A</text><text x="216" y="661">A1</text><text x="567" y="186">6</text><text x="925" y="186">7</text><text x="1283" y="186">8</text>
        </g>
        <g shape-rendering="auto">
          <path d="M257 627L264 592" stroke="#0a7cff" stroke-width="3.500"/><path d="M266 580L260 592L268 592Z" fill="#0a7cff"/>
          <path d="M257 627L244 614" stroke="#22ff22" stroke-width="3.500"/><path d="M239 609L248 611L241 617Z" fill="#22ff22"/>
          <path d="M257 627L293 628" stroke="#ff0000" stroke-width="3.500"/><path d="M303 628L292 624L292 632Z" fill="#ff0000"/>
          <text x="253" y="584" font-family="Liberation Sans" font-size="12" fill="#0a7cff">Z</text>
          <text x="250" y="617" font-family="Liberation Sans" font-size="9" fill="#22aa22">Y</text>
          <text x="286" y="627" font-family="Liberation Sans" font-size="11" fill="#b00000">X</text>
        </g>
      </svg>
    </div>
    <!-- bottom toolbar -->
    <div class="h-[27px] flex items-center shrink-0 pl-[1px]">
      <div class="h-[27px] w-[209px] bg-[#f5f5f5] flex items-center shrink-0">
        <span class="w-[10px] pl-[3px]"><span class="block w-[2px] h-[14px] border-l-2 border-dotted border-[#aaa]"></span></span>
        <span class="flex w-[48px] items-center gap-[4px]"><svg class="size-4 shrink-0"><use href="#orth"/></svg>正交</span>
        <span class="h-[23px] w-[76px] bg-[#dcebf7] border border-[#0078d7] flex items-center pl-[2px] gap-[2px]"><svg class="size-[18px] shrink-0"><use href="#snap"/></svg>对象捕捉</span>
        <span class="ml-[2px] flex items-center gap-[4px]"><svg class="size-[17px] shrink-0"><use href="#dyn"/></svg>动态输入</span>
      </div>
      <div class="ml-[5px] h-[27px] w-[260px] bg-[#f5f5f5] flex items-center shrink-0">
        <span class="w-[7px] pl-[3px]"><span class="block w-[2px] h-[14px] border-l-2 border-dotted border-[#aaa]"></span></span>
        <span class="flex w-[48px] items-center gap-[4px]"><svg class="size-4 shrink-0"><use href="#cross"/></svg>交点</span>
        <span class="h-[23px] w-[51px] bg-[#dcebf7] border border-[#0078d7] flex items-center pl-[3px] gap-[3px]"><svg class="size-4 shrink-0"><use href="#perp"/></svg>垂点</span>
        <span class="h-[23px] w-[52px] bg-[#dcebf7] border border-[#0078d7] flex items-center pl-[2px] gap-[4px]"><svg class="size-4 shrink-0"><use href="#midp"/></svg>中点</span>
        <span class="ml-[3px] flex w-[49px] items-center gap-[2px]"><svg class="size-4 shrink-0"><use href="#vert"/></svg>顶点</span>
        <span class="flex items-center gap-[4px]"><svg class="size-4 shrink-0"><use href="#coord"/></svg>坐标</span>
      </div>
    </div>
  </div>
</div>

<!-- status -->
<div class="mt-[1px] h-[21px] flex items-stretch gap-[2px] pb-px whitespace-nowrap">
  <span class="w-[148px] bg-white border border-[#ddd] pl-px flex items-center font-['Liberation_Mono','Noto_Sans_CJK_SC',monospace] text-[10px]">X=65045 Y=14462</span>
  <span class="w-[79px] bg-white border border-[#ddd] pl-px flex items-center">层高:<span class="font-['Liberation_Mono'] text-[10px]">3.55m</span></span>
  <span class="w-[98px] bg-white border border-[#ddd] pl-px flex items-center">底标高:<span class="font-['Liberation_Mono'] text-[10px]">-3.58m</span></span>
  <span class="w-[48px] bg-white border border-[#ddd] pl-px flex items-center font-['Liberation_Mono'] text-[10px]">1(2)</span>
  <span class="w-[913px] bg-white border border-[#ddd] pl-px flex items-center">按鼠标左键指定第一个角点，或拾取构件图元</span>
  <span class="w-[58px] bg-white border border-[#ddd] pl-px flex items-center font-['Liberation_Mono'] text-[10px]">487.1 FPS</span>
</div>

<!-- sogou floating -->
<div class="absolute left-[1087px] top-[696px] z-20 flex items-center">
  <span class="size-[26px] bg-[#f0501e] rounded-[3px] -rotate-6 flex items-center justify-center text-white font-bold text-[22px] leading-none font-['Liberation_Sans']">S</span>
  <div class="-ml-[2px] h-[23px] w-[158px] bg-white border border-[#c5d4e5] flex items-center text-[#1a6fc4] font-bold text-[13px] pl-[8px]">
    <span>英</span>
    <svg class="ml-[6px] size-4" viewBox="0 0 16 16"><circle cx="3" cy="6" r="1.300" fill="#1a6fc4"/><path d="M10 4q2 4-2 8" stroke="#1a6fc4" stroke-width="1.500" fill="none"/></svg>
    <svg class="ml-[5px] size-4" viewBox="0 0 16 16"><rect x="5" y="0" width="6" height="10" rx="3" fill="#1a7fd4"/><path d="M3 7q0 5 5 5t5-5M8 12v3M5 15h6" stroke="#1a7fd4" fill="none"/></svg>
    <svg class="ml-[6px] size-4" viewBox="0 0 16 16"><rect y="2" width="16" height="12" rx="1" fill="#1a7fd4"/><path d="M2 5h12M2 8h12M4 11h8" stroke="#fff" stroke-dasharray="1.500 1"/></svg>
    <svg class="ml-[7px] size-4" viewBox="0 0 16 16"><circle cx="6" cy="4" r="3" fill="#b8c6d4"/><path d="M1 14q0-6 5-6t4 6z" fill="#b8c6d4"/><rect x="8" y="9" width="8" height="6" fill="#dfe7ee"/></svg>
    <svg class="ml-[2px] size-4" viewBox="0 0 16 16"><path d="M5 1l3 2 3-2 4 3-2 3-1-1v9H4V6L3 7 1 4z" fill="#1a7fd4"/></svg>
    <svg class="ml-[5px] size-4" viewBox="0 0 16 16"><path d="M14 3l-3 3-2-1 3-3q-4-2-5 2l.5 2-6 6 2 2 6-6 2 .5q4-1 2.500-5.500z" fill="#1a7fd4"/></svg>
  </div>
</div>

<!-- taskbar -->
<div class="h-[40px] bg-[#06121c] flex items-center text-white relative whitespace-nowrap">
  <svg class="ml-[15px] size-4 shrink-0" viewBox="0 0 16 16"><path d="M0 2.500l6.500-1V7.500H0zM7.500 1.300L16 0v7.500H7.500zM0 8.500h6.500v6l-6.500-1zM7.500 8.500H16V16l-8.500-1.300z" fill="#fff"/></svg>
  <div class="ml-[17px] h-[40px] w-[344px] bg-[#333] flex items-center shrink-0">
    <span class="ml-[12px] size-4 rounded-full border-2 border-white shrink-0"></span>
    <span class="ml-[8px] text-[14px] text-[#9b9b9b] w-[279px]">在这里输入你要搜索的内容</span>
    <svg class="size-4 shrink-0" viewBox="0 0 16 16"><rect x="5" y="1" width="6" height="10" rx="3" fill="none" stroke="#aaa"/><path d="M3 8q0 5 5 5t5-5M8 13v2M5 15h6" stroke="#aaa" fill="none"/></svg>
  </div>
  <div class="h-[40px] flex items-center shrink-0 ml-[3px]">
    <span class="w-[50px] h-[40px] flex items-center justify-center"><svg class="size-[22px]" viewBox="0 0 22 22"><path d="M11 11Q3 12 1 6t5-5q5 1 5 10zM11 11q1-8 6-10t4 5-10 5zM11 11q8-1 10 5t-5 5-5-10zM11 11q-1 8-6 10T1 16t10-5z" fill="#e8e8e8"/></svg></span>
    <span class="w-[49px] h-[40px] flex items-center justify-center"><svg class="size-[20px]" viewBox="0 0 20 20"><path d="M18 4Q10-1 4 4t-2 11 11 2 2-8-6-2-2 4 4 2" fill="none" stroke="#bbb" stroke-width="1.300"/></svg></span>
    <span class="w-[52px] h-[40px] flex items-center justify-center"><svg class="size-[22px]" viewBox="0 0 22 22"><path d="M2 11Q3 2 12 2q8 0 9 11H7q1 4 6 4 4 0 7-2v4q-3 2-8 2Q2 21 2 11zm5-2h9q-1-3-4-3-4 0-5 3z" fill="#1676d2"/></svg></span>
    <span class="w-[47px] h-[40px] flex items-center justify-center"><svg class="size-[22px]" viewBox="0 0 22 22"><path d="M2 6h18v15H2z" fill="#fff"/><path d="M7 6q0-5 4-5t4 5" fill="none" stroke="#fff"/><path d="M7 9h3.500v3.500H7zM11.500 9H15v3.500h-3.500zM7 13.500h3.500V17H7zM11.500 13.500H15V17h-3.500z" fill="#111"/></svg></span>
    <span class="w-[50px] h-[40px] flex items-center justify-center"><svg class="size-[22px]" viewBox="0 0 22 22"><path d="M1 3h8l2 2h10v15H1z" fill="#f5d77f"/><path d="M6 12h10v8h-3v-4H9v4H6z" fill="#2b9fd9"/></svg></span>
    <span class="w-[49px] h-[40px] flex items-center justify-center"><span class="text-[#2a9ae8] font-bold text-[28px] leading-none font-['Liberation_Sans']">G</span></span>
    <span class="w-[49px] h-[40px] flex items-center justify-center"><svg class="size-[22px]" viewBox="0 0 22 22"><circle cx="11" cy="11" r="10" fill="#5cc24a"/><ellipse cx="11" cy="11" rx="8" ry="6" fill="#fff" opacity=".8"/><path d="M7 11h8M8 14q4 2 7-1" stroke="#3a9c30" stroke-width="2" fill="none"/></svg></span>
    <span class="w-[48px] h-[40px] bg-[#2c353c] flex items-center justify-center"><span class="size-[24px] rounded-[4px] bg-[#0a9af0] flex items-center justify-center"><svg class="size-[16px]" viewBox="0 0 12 12"><path d="M6 1v10M1 6h10M3 3q3 3 6 0" stroke="#fff" stroke-width="1.200" fill="none"/></svg></span></span>
    <span class="w-[48px] h-[40px] flex items-center justify-center"><svg class="size-[24px]"><use href="#ques"/></svg></span>
    <span class="w-[49px] h-[40px] flex items-center justify-center"><svg class="size-[24px]" viewBox="0 0 24 24"><rect x="1" y="1" width="22" height="22" rx="2" fill="#f3a51e"/><path d="M5 6h10l3 3v10H5z" fill="#fff3d2" stroke="#c77"/><path d="M7 10h8M7 13h8M7 16h6" stroke="#a85"/><path d="M12 14L21 3" stroke="#a33" stroke-width="2"/></svg></span>
    <span class="w-[48px] h-[40px] flex items-center justify-center"><svg class="size-[24px]"><use href="#ques"/></svg></span>
  </div>
  <div class="ml-[79px] w-[70px] text-center leading-[18px] shrink-0"><div>27%</div><div>CPU使用</div></div>
  <span class="ml-[4px] w-[24px] h-[40px] bg-[#16212a] flex items-center justify-center shrink-0"><svg class="w-[12px] h-[7px]" viewBox="0 0 12 7"><path d="M1 6l5-5 5 5" fill="none" stroke="#fff"/></svg></span>
  <svg class="ml-[4px] size-4 shrink-0" viewBox="0 0 16 16"><path d="M4 4h11v8H4z" fill="none" stroke="#fff"/><path d="M5 5h6v6H5zM0 6h3M0 10h3" fill="#fff" stroke="#fff"/></svg>
  <svg class="ml-[9px] size-4 shrink-0" viewBox="0 0 16 16"><path d="M1 15q1-9 11-12M4 15q1-6 8-8M7 15q1-3 5-4" fill="none" stroke="#ddd"/></svg>
  <svg class="ml-[6px] size-4 shrink-0" viewBox="0 0 16 16"><path d="M1 6h3l4-4v12l-4-4H1z" fill="none" stroke="#fff"/><path d="M10 5q2 3 0 6M12 3q3 5 0 10" fill="none" stroke="#aaa"/></svg>
  <span class="ml-[8px] w-[14px] text-[14px] shrink-0">中</span>
  <span class="ml-[11px] size-[16px] bg-[#f0501e] rounded-[2px] -rotate-6 flex items-center justify-center font-bold text-[13px] font-['Liberation_Sans'] shrink-0">S</span>
  <div class="ml-[18px] w-[66px] text-center leading-[18px] shrink-0"><div>18:16</div><div>2017/7/21</div></div>
  <div class="ml-[14px] relative size-[22px] shrink-0"><svg class="size-[16px]" viewBox="0 0 16 16"><path d="M1 1h14v11H6l-3 3v-3H1z" fill="#fff"/><path d="M3 4h10M3 7h10" stroke="#333"/></svg><span class="absolute left-[6px] top-[6px] size-[16px] rounded-full bg-[#333] border border-[#888] text-[10px] font-bold flex items-center justify-center">2</span></div>
  <span class="absolute left-[1361px] top-0 w-px h-[40px] bg-[#555]"></span>
  <span class="absolute left-[697px] bottom-0 w-[40px] h-[2px] bg-[#76b9ed]"></span>
  <span class="absolute left-[742px] bottom-0 w-[48px] h-[2px] bg-[#76b9ed]"></span>
  <span class="absolute left-[795px] bottom-0 w-[44px] h-[2px] bg-[#76b9ed]"></span>
  <span class="absolute left-[844px] bottom-0 w-[45px] h-[2px] bg-[#76b9ed]"></span>
  <span class="absolute left-[893px] bottom-0 w-[40px] h-[2px] bg-[#76b9ed]"></span>
</div>

<!-- floating offset toolbar -->
<div class="absolute left-[915px] top-[62px] w-[404px] h-[55px] bg-white border border-[#aaa] shadow-[1px_2px_4px_rgba(0,0,0,.35)] z-10 flex flex-col whitespace-nowrap">
  <div class="mt-[6px] h-[21px] bg-[#9e9e9e] flex items-center text-[#eee] pl-[3px] shrink-0">偏移工具栏<svg class="ml-auto mr-[6px] size-[9px]" viewBox="0 0 9 9"><path d="M1 1l7 7M8 1L1 8" stroke="#fff" stroke-width="1.300"/></svg></div>
  <div class="flex-1 bg-[#f5f5f5] flex items-center">
    <span class="w-[47px] h-[26px] bg-white flex items-center pl-[3px]">不偏移</span>
    <svg class="ml-[3px] w-[7px] h-[4px] shrink-0"><use href="#dd"/></svg>
    <span class="ml-[6px] w-px h-[16px] bg-[#bbb]"></span>
    <span class="ml-[2px] w-[19px] text-[#888]">X=</span>
    <span class="w-[58px] h-[21px] bg-white border border-[#999] flex items-center justify-end pr-[16px] relative text-[#888]">0<span class="absolute right-[3px] top-[3px] border-x-[3px] border-x-transparent border-b-[3px] border-b-[#777]"></span><span class="absolute right-[3px] bottom-[3px] border-x-[3px] border-x-transparent border-t-[3px] border-t-[#777]"></span></span>
    <span class="ml-[1px] w-[26px] text-[#888]">mm</span>
    <span class="w-[18px] text-[#888]">Y=</span>
    <span class="w-[58px] h-[21px] bg-white border border-[#999] flex items-center justify-end pr-[16px] relative text-[#888]">0<span class="absolute right-[3px] top-[3px] border-x-[3px] border-x-transparent border-b-[3px] border-b-[#777]"></span><span class="absolute right-[3px] bottom-[3px] border-x-[3px] border-x-transparent border-t-[3px] border-t-[#777]"></span></span>
    <span class="ml-[2px] w-[25px] text-[#888]">mm</span>
    <span class="w-px h-[16px] bg-[#bbb]"></span>
    <span class="ml-[3px] size-[11px] border border-[#999] shrink-0"></span>
    <span class="ml-[9px] w-[28px]">旋转</span>
    <span class="w-[67px] h-[21px] bg-white border border-[#999] flex items-center justify-end pr-[17px] relative text-[#888]">0.000<span class="absolute right-[3px] top-[3px] border-x-[3px] border-x-transparent border-b-[3px] border-b-[#777]"></span><span class="absolute right-[3px] bottom-[3px] border-x-[3px] border-x-transparent border-t-[3px] border-t-[#777]"></span></span>
    <span class="ml-[3px] text-[#888]">°</span>
  </div>
</div>
</body></html>
